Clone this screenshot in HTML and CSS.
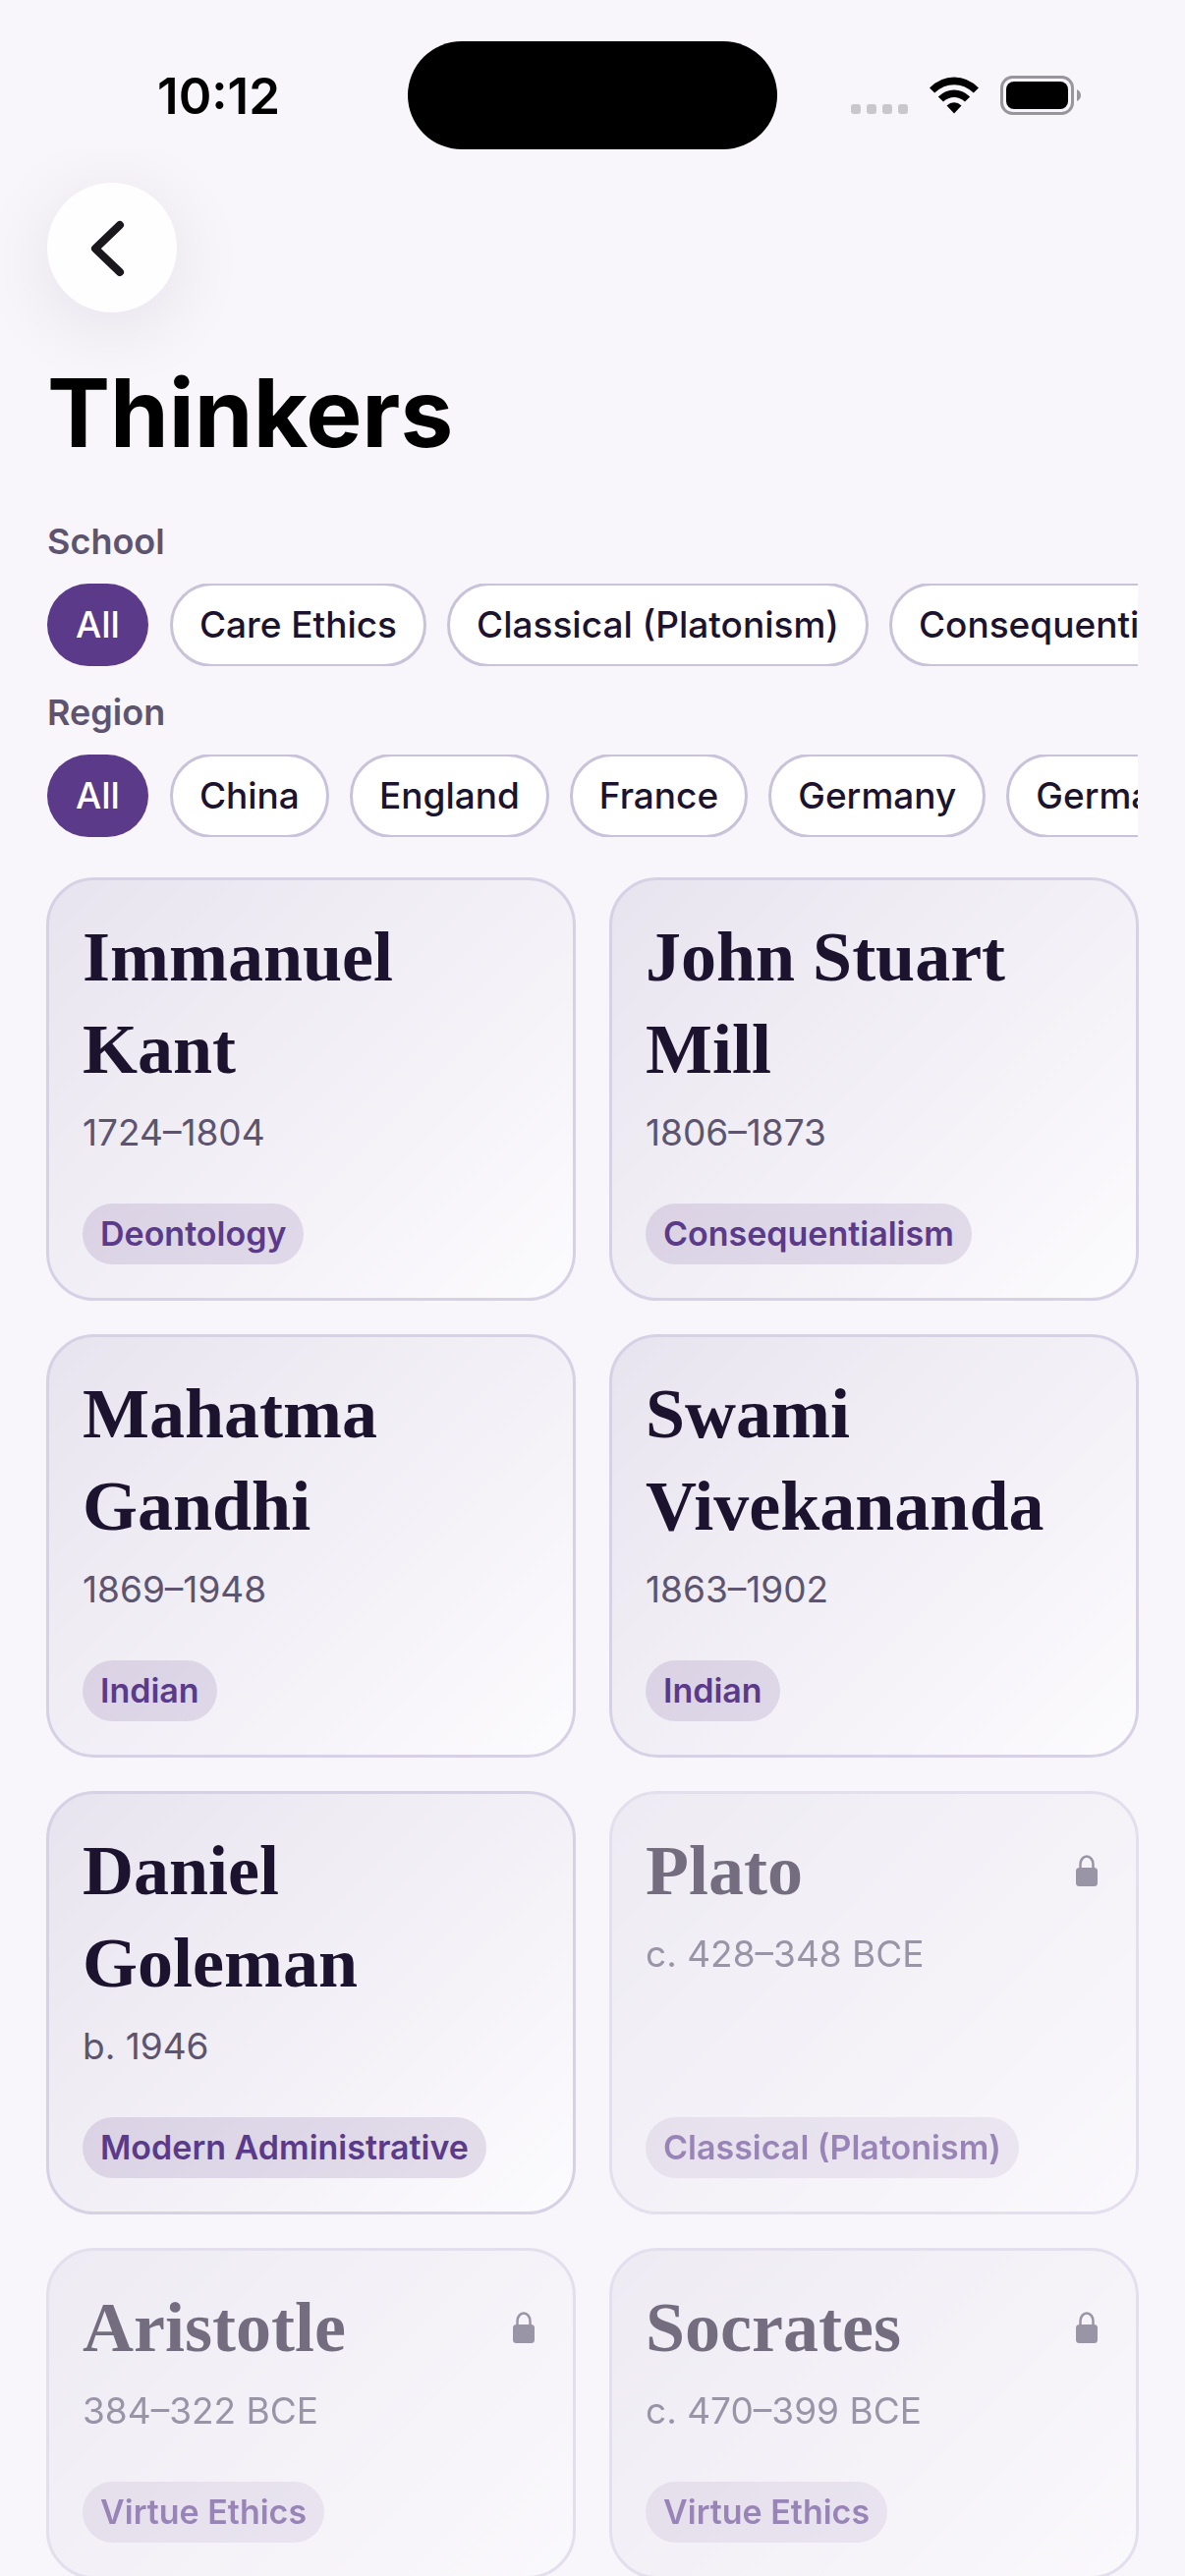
FILE: index.html
```html
<!DOCTYPE html>
<html lang="en">
<head>
<meta charset="utf-8">
<meta name="viewport" content="width=device-width, initial-scale=1">
<title>Thinkers</title>
<link rel="stylesheet" href="styles.css">
</head>
<body>
<svg class="sprite" aria-hidden="true">
  <symbol id="lock" viewBox="0 0 22 32">
    <path d="M4.500 15V9.500a6.500 8 0 0 1 13 0V15" fill="none" stroke="currentColor" stroke-width="2.500"/>
    <rect x="0" y="13" width="22" height="19" rx="3.500" fill="currentColor"/>
  </symbol>
</svg>
<div class="app">
  <header class="status">
    <time class="clock">10:12</time>
    <div class="island"></div>
    <div class="indicators">
      <svg class="signal" width="58" height="38" viewBox="0 0 58 38" aria-label="No signal">
        <g fill="#c9c7cc"><rect x="0" y="28" width="10" height="10" rx="3"/><rect x="16" y="28" width="10" height="10" rx="3"/><rect x="32" y="28" width="10" height="10" rx="3"/><rect x="48" y="28" width="10" height="10" rx="3"/></g>
      </svg>
      <svg width="50" height="38" viewBox="0 0 50 38" aria-label="Wi-Fi">
        <path d="M0 11.500Q11 .5 25 .5T50 11.500L44.800 16.500Q36 8.200 25 8.200T5.200 16.500Z"/>
        <path d="M8.800 20.500Q16 13.500 25 13.500T41.200 20.500L36 25.600Q31 21 25 21T14 25.600Z"/>
        <path d="M17.500 29.500Q21 26.200 25 26.200T32.500 29.500L25 37.500Z"/>
      </svg>
      <svg width="82" height="40" viewBox="0 0 82 40" aria-label="Battery full">
        <rect x="1.500" y="1.500" width="72" height="37" rx="11" fill="none" stroke="#98959c" stroke-width="3"/>
        <rect x="6" y="6" width="63" height="28" rx="8"/>
        <path d="M78 14q4 2 4 6t-4 6z" fill="#98959c"/>
      </svg>
    </div>
  </header>
  <main class="page">
    <button class="back" type="button" aria-label="Back">
      <svg width="132" height="132" viewBox="0 0 132 132" aria-hidden="true"><path d="M74 43L49 67L74 91" fill="none" stroke="#1a181c" stroke-width="8" stroke-linecap="round" stroke-linejoin="round"/></svg>
    </button>
    <h1 class="title">Thinkers</h1>
    <div class="filters">
      <section class="filter">
        <h2 class="label" id="school">School</h2>
        <div class="chips" role="group" aria-labelledby="school">
          <button class="chip active" type="button">All</button>
          <button class="chip" type="button">Care Ethics</button>
          <button class="chip" type="button">Classical (Platonism)</button>
          <button class="chip" type="button">Consequentialism</button>
        </div>
      </section>
      <section class="filter">
        <h2 class="label" id="region">Region</h2>
        <div class="chips" role="group" aria-labelledby="region">
          <button class="chip active" type="button">All</button>
          <button class="chip" type="button">China</button>
          <button class="chip" type="button">England</button>
          <button class="chip" type="button">France</button>
          <button class="chip" type="button">Germany</button>
          <button class="chip" type="button">Germany / USA</button>
        </div>
      </section>
    </div>
    <div class="cards">
      <a class="card" href="#kant"><span class="head"><span class="name">Immanuel Kant</span></span><span class="dates">1724–1804</span><span class="tag">Deontology</span></a>
      <a class="card" href="#mill"><span class="head"><span class="name">John Stuart Mill</span></span><span class="dates">1806–1873</span><span class="tag">Consequentialism</span></a>
      <a class="card" href="#gandhi"><span class="head"><span class="name">Mahatma Gandhi</span></span><span class="dates">1869–1948</span><span class="tag">Indian</span></a>
      <a class="card" href="#vivekananda"><span class="head"><span class="name">Swami Vivekananda</span></span><span class="dates">1863–1902</span><span class="tag">Indian</span></a>
      <a class="card" href="#goleman"><span class="head"><span class="name">Daniel Goleman</span></span><span class="dates">b. 1946</span><span class="tag">Modern Administrative</span></a>
      <a class="card locked" href="#plato"><span class="head"><span class="name">Plato</span><svg class="lock" aria-label="Locked"><use href="#lock"/></svg></span><span class="dates">c. 428–348 BCE</span><span class="tag">Classical (Platonism)</span></a>
      <a class="card locked" href="#aristotle"><span class="head"><span class="name">Aristotle</span><svg class="lock" aria-label="Locked"><use href="#lock"/></svg></span><span class="dates">384–322 BCE</span><span class="tag">Virtue Ethics</span></a>
      <a class="card locked" href="#socrates"><span class="head"><span class="name">Socrates</span><svg class="lock" aria-label="Locked"><use href="#lock"/></svg></span><span class="dates">c. 470–399 BCE</span><span class="tag">Virtue Ethics</span></a>
    </div>
  </main>
</div>
</body>
</html>
```
FILE: styles.css
```css
* {
  box-sizing: border-box;
}

body {
  margin: 0;
  background: #f8f5fb;
  color: #1c132e;
  font-family: Inter, "Liberation Sans", sans-serif;
}

button {
  border: 0;
  padding: 0;
  color: inherit;
  font: inherit;
}

.sprite {
  display: none;
}

.app {
  display: flex;
  flex-direction: column;
  height: 100vh;
}

.status {
  display: grid;
  grid-template-columns: 1fr 376px 1fr;
  align-items: center;
  flex: none;
  padding-top: 42px;
}

.clock {
  padding: 2px 0 0 30px;
  color: #000;
  font-size: 51px;
  font-weight: 600;
  line-height: 60px;
  text-align: center;
}

.island {
  height: 110px;
  border-radius: 55px;
  background: #000;
}

.indicators {
  display: flex;
  align-items: center;
  justify-content: center;
  gap: 22px;
  padding-right: 32px;
}

.page {
  flex: 1;
  min-height: 0;
  overflow-y: auto;
  padding: 34px 48px 48px;
  scrollbar-width: none;
}

.back {
  display: block;
  width: 132px;
  height: 132px;
  border-radius: 50%;
  background: #fefdff;
  box-shadow: 0 14px 72px 8px rgba(30, 10, 30, 0.07);
}

.back svg {
  display: block;
}

.title {
  margin: 42px 0 48px;
  color: #000;
  font-size: 96px;
  font-weight: 700;
  line-height: 120px;
}

.filters {
  display: flex;
  flex-direction: column;
  gap: 24px;
}

.label {
  margin: 0 0 20px;
  color: #5d5470;
  font-size: 36px;
  font-weight: 600;
  line-height: 46px;
}

.chips {
  display: flex;
  gap: 23px;
  overflow-x: auto;
  scrollbar-width: none;
}

.chip {
  flex: none;
  height: 84px;
  padding: 0 29px 2px;
  border-radius: 42px;
  outline: 3px solid #c9c3da;
  outline-offset: -2px;
  background: #fff;
  font-size: 37px;
  font-weight: 500;
}

.chip.active {
  outline: 0;
  background: #5b3a8a;
  color: #fff;
}

.cards {
  display: grid;
  grid-template-columns: 1fr 1fr;
  gap: 36px;
  margin-top: 42px;
}

.card {
  display: flex;
  flex-direction: column;
  align-items: flex-start;
  padding: 33px 36px 36px;
  border-radius: 48px;
  outline: 3px solid #d6d1e4;
  outline-offset: -2px;
  background: linear-gradient(135deg, #e8e4ef, #fcfbfd);
  color: inherit;
  text-decoration: none;
}

.locked {
  opacity: 0.6;
}

.head {
  display: flex;
  align-items: flex-start;
  justify-content: space-between;
  align-self: stretch;
}

.name {
  font-family: "Liberation Serif", serif;
  font-size: 72px;
  font-weight: 700;
  line-height: 94px;
}

.lock {
  flex: none;
  width: 22px;
  height: 32px;
  margin: 31px 5px 0 0;
  color: #5d5470;
}

.dates {
  margin-bottom: 48px;
  padding-top: 14px;
  color: #5d5470;
  font-size: 37px;
  line-height: 48px;
}

.tag {
  margin-top: auto;
  padding: 0 18px;
  border-radius: 31px;
  background: rgba(91, 58, 138, 0.14);
  color: #5b3a8a;
  font-size: 34px;
  font-weight: 600;
  line-height: 62px;
}
```
